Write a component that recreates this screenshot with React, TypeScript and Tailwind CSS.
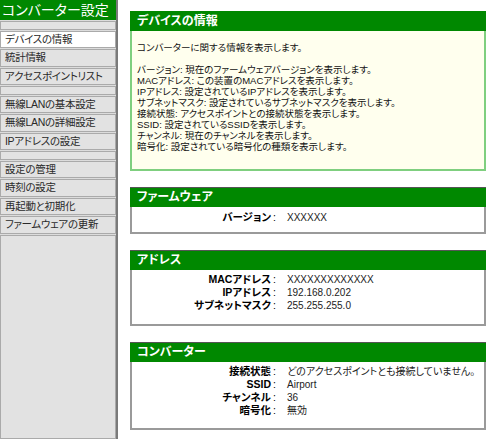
import React from "react"

const font =
  "[font-family:'Liberation_Sans','Noto_Sans_CJK_JP',sans-serif] [font-feature-settings:'palt']"

type NavEntry = { label: string; active?: boolean } | null

const navItems: NavEntry[] = [
  null,
  { label: "デバイスの情報", active: true },
  { label: "統計情報" },
  { label: "アクセスポイントリスト" },
  null,
  { label: "無線LANの基本設定" },
  { label: "無線LANの詳細設定" },
  { label: "IPアドレスの設定" },
  null,
  { label: "設定の管理" },
  { label: "時刻の設定" },
  { label: "再起動と初期化" },
  { label: "ファームウェアの更新" },
]

const helpLines = [
  "バージョン: 現在のファームウェアバージョンを表示します。",
  "MACアドレス: この装置のMACアドレスを表示します。",
  "IPアドレス: 設定されているIPアドレスを表示します。",
  "サブネットマスク: 設定されているサブネットマスクを表示します。",
  "接続状態: アクセスポイントとの接続状態を表示します。",
  "SSID: 設定されているSSIDを表示します。",
  "チャンネル: 現在のチャンネルを表示します。",
  "暗号化: 設定されている暗号化の種類を表示します。",
]

function Sidebar() {
  return (
    <aside className="w-[118px] shrink-0 bg-[#dcdcdc] border-r-2 border-[#7a7a7a] flex flex-col gap-px">
      <div className="h-[20px] bg-[#008800] text-white text-[14px] leading-[20px] px-[2px] whitespace-nowrap">
        コンバーター設定
      </div>
      {navItems.map((item, i) =>
        item ? (
          <div
            key={i}
            className={
              "h-[17.5px] border border-[#aaaaaa] text-[10.5px] tracking-[-0.3px] leading-[15px] px-[4px] text-[#2a2a2a] whitespace-nowrap " +
              (item.active ? "bg-white" : "bg-[#e2e2e2]")
            }
          >
            {item.label}
          </div>
        ) : (
          <div key={i} className="h-[8.5px] border border-[#aaaaaa] bg-[#e2e2e2]" />
        )
      )}
      <div className="flex-1 border border-[#aaaaaa] bg-[#e2e2e2]" />
    </aside>
  )
}

function InfoRows({ rows }: { rows: [string, string][] }) {
  return (
    <div className="grid grid-cols-[139px_16px_1fr]">
      {rows.map(([label, value]) => (
        <React.Fragment key={label}>
          <div className="text-right text-[10.5px] font-bold leading-[13px] text-black">{label}</div>
          <div className="text-[10.5px] leading-[13px] pl-[2px] text-black">:</div>
          <div className="text-[10px] leading-[13px] text-[#222] whitespace-nowrap">{value}</div>
        </React.Fragment>
      ))}
    </div>
  )
}

function Panel({ title, body }: { title: string; body: React.ReactNode }) {
  return (
    <section className="flex flex-col">
      <div className="h-[20px] bg-[#008800] border-t border-[#555] text-white font-bold text-[12px] leading-[19px] px-[7px]">
        {title}
      </div>
      <div className="bg-white border-2 border-t-0 border-[#9a9a9a]">{body}</div>
    </section>
  )
}

export default function App() {
  return (
    <div className={"flex w-[500px] h-[439px] bg-white overflow-hidden " + font}>
      <Sidebar />
      <main className="flex-1 pl-[12px] pr-[14px] pt-[11px] flex flex-col gap-[16px]">
        {/* Device info help */}
        <section className="flex flex-col">
          <div className="h-[20px] bg-[#008800] text-white font-bold text-[12px] leading-[20px] px-[7px]">
            デバイスの情報
          </div>
          <div className="h-[140px] bg-[#ffffee] border-2 border-t-0 border-[#7fcf7f] px-[5px] pt-[11px] text-[9.5px] text-[#111]">
            <p className="leading-[12px]">コンバーターに関する情報を表示します。</p>
            <div className="mt-[10px] leading-[11px]">
              {helpLines.map((l) => (
                <div key={l} className="whitespace-nowrap">{l}</div>
              ))}
            </div>
          </div>
        </section>

        <Panel
          title="ファームウェア"
          body={
            <div className="pt-[4px] pb-[8px]">
              <InfoRows rows={[["バージョン", "XXXXXX"]]} />
            </div>
          }
        />

        <Panel
          title="アドレス"
          body={
            <div className="pt-[3px] pb-[12px]">
              <InfoRows
                rows={[
                  ["MACアドレス", "XXXXXXXXXXXXX"],
                  ["IPアドレス", "192.168.0.202"],
                  ["サブネットマスク", "255.255.255.0"],
                ]}
              />
            </div>
          }
        />

        <Panel
          title="コンバーター"
          body={
            <div className="pt-[3px] pb-[11px]">
              <InfoRows
                rows={[
                  ["接続状態", "どのアクセスポイントとも接続していません。"],
                  ["SSID", "Airport"],
                  ["チャンネル", "36"],
                  ["暗号化", "無効"],
                ]}
              />
            </div>
          }
        />
      </main>
    </div>
  )
}
